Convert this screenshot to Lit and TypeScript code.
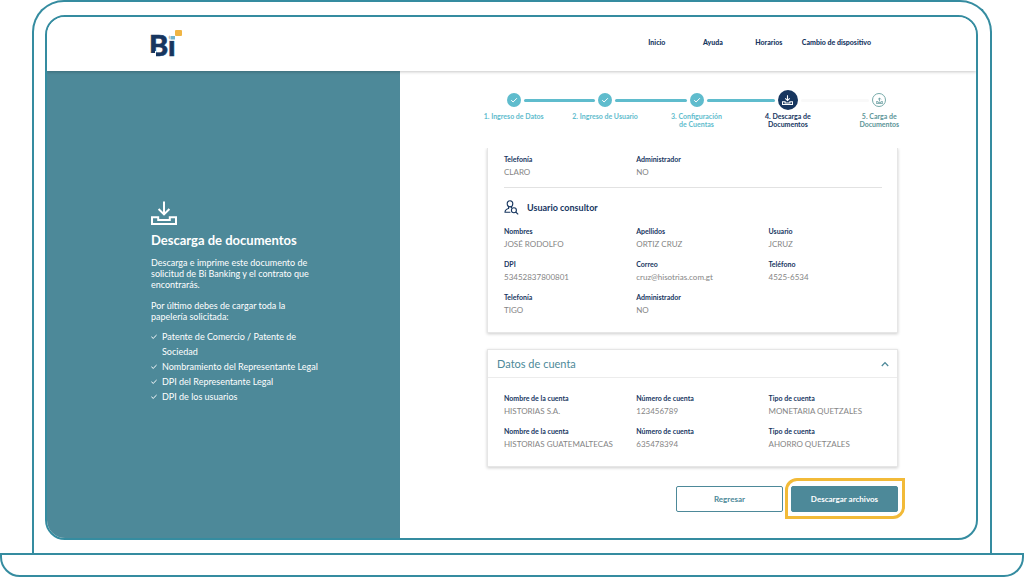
import { LitElement, html, css, svg, nothing } from "lit";
import { customElement, property, state } from "lit/decorators.js";
import { classMap } from "lit/directives/class-map.js";

type StepState = "done" | "current" | "pending";
interface Step {
  label: string;
  state: StepState;
}
type Field = [label: string, value: string];

const trayDown = svg`
  <path d="M13 0.5V13M7.6 8L13 13.4L18.4 8" />
  <path d="M1 16.2H7.2V19H18.8V16.2H25V23H1Z" />`;
const trayUp = svg`
  <path d="M13 15V3M7.6 8L13 2.6L18.4 8" />
  <path d="M1 16.2H7.2V19H18.8V16.2H25V23H1Z" />`;

@customElement("bi-stepper")
export class BiStepper extends LitElement {
  @property({ attribute: false }) steps: Step[] = [];

  static styles = css`
    :host {
      display: block;
    }
    .steps {
      display: grid;
      grid-auto-flow: column;
      grid-auto-columns: 1fr;
      list-style: none;
      margin: 0;
      padding: 0;
    }
    .track {
      display: flex;
      align-items: center;
      gap: 3px;
      height: 20px;
    }
    .line {
      flex: 1;
      height: 3px;
      background: #5fbccd;
    }
    .before {
      border-radius: 0 2px 2px 0;
    }
    .after {
      border-radius: 2px 0 0 2px;
    }
    .pale {
      background: #f9f9f9;
    }
    .hidden {
      visibility: hidden;
    }
    .dot {
      box-sizing: border-box;
      display: grid;
      place-items: center;
      width: 14px;
      height: 14px;
      border-radius: 50%;
      background: #5fbccd;
    }
    .current .dot {
      width: 20px;
      height: 20px;
      background: #17365f;
    }
    .pending .dot {
      background: #fff;
      border: 1px solid #76aaa9;
    }
    svg {
      fill: none;
      stroke: #fff;
    }
    .pending svg {
      stroke: #5c9598;
    }
    .label {
      display: block;
      width: 56px;
      margin: 2px auto 0;
      text-align: center;
      font-size: 7px;
      line-height: 8px;
      font-weight: 700;
      color: #5fbccd;
    }
    .wide {
      width: auto;
    }
    .current .label {
      color: #17365f;
    }
    .pending .label {
      color: #5c9598;
    }
  `;

  private icon(state: StepState) {
    if (state === "done")
      return html`<svg width="8" height="8" viewBox="0 0 8 8"><path d="M1.2 4.2L3.1 6L6.9 2.2" /></svg>`;
    return state === "current"
      ? html`<svg width="11" height="10" viewBox="0 0 26 24" stroke-width="2.6">${trayDown}</svg>`
      : html`<svg width="7" height="7" viewBox="0 0 26 24" stroke-width="2.8">${trayUp}</svg>`;
  }

  render() {
    const last = this.steps.length - 1;
    return html`<ol class="steps">
      ${this.steps.map(
        (s, i) => html`<li class=${s.state} aria-current=${s.state === "current" ? "step" : nothing}>
          <span class="track">
            <span class=${classMap({ line: true, before: true, hidden: i === 0, pale: s.state === "pending" })}></span>
            <span class="dot">${this.icon(s.state)}</span>
            <span class=${classMap({ line: true, after: true, hidden: i === last, pale: s.state !== "done" })}></span>
          </span>
          <span class=${classMap({ label: true, wide: i < 2 })}>${s.label}</span>
        </li>`
      )}
    </ol>`;
  }
}

@customElement("bi-fields")
export class BiFields extends LitElement {
  @property({ attribute: false }) fields: Field[] = [];

  static styles = css`
    :host {
      display: block;
    }
    .fields {
      display: grid;
      grid-template-columns: 35fr 35fr 34fr;
      row-gap: 9px;
      margin: 0;
    }
    .label {
      font-size: 7px;
      line-height: 10px;
      font-weight: 700;
      color: #17365f;
    }
    .value {
      margin: 3px 0 0;
      font-size: 8px;
      line-height: 11px;
      color: #858585;
      white-space: nowrap;
    }
  `;

  render() {
    return html`<dl class="fields">
      ${this.fields.map(
        ([label, value]) => html`<div>
          <dt class="label">${label}</dt>
          <dd class="value">${value}</dd>
        </div>`
      )}
    </dl>`;
  }
}

@customElement("app-root")
export class AppRoot extends LitElement {
  @state() private open = true;

  private steps: Step[] = [
    { label: "1. Ingreso de Datos", state: "done" },
    { label: "2. Ingreso de Usuario", state: "done" },
    { label: "3. Configuración de Cuentas", state: "done" },
    { label: "4. Descarga de Documentos", state: "current" },
    { label: "5. Carga de Documentos", state: "pending" },
  ];

  private phone: Field[] = [
    ["Telefonía", "CLARO"],
    ["Administrador", "NO"],
  ];

  private user: Field[] = [
    ["Nombres", "JOSÉ RODOLFO"],
    ["Apellidos", "ORTIZ CRUZ"],
    ["Usuario", "JCRUZ"],
    ["DPI", "53452837800801"],
    ["Correo", "cruz@hisotrias.com.gt"],
    ["Teléfono", "4525-6534"],
    ["Telefonía", "TIGO"],
    ["Administrador", "NO"],
  ];

  private accounts: Field[] = [
    ["Nombre de la cuenta", "HISTORIAS S.A."],
    ["Número de cuenta", "123456789"],
    ["Tipo de cuenta", "MONETARIA QUETZALES"],
    ["Nombre de la cuenta", "HISTORIAS GUATEMALTECAS"],
    ["Número de cuenta", "635478394"],
    ["Tipo de cuenta", "AHORRO QUETZALES"],
  ];

  private papers = [
    "Patente de Comercio / Patente de Sociedad",
    "Nombramiento del Representante Legal",
    "DPI del Representante Legal",
    "DPI de los usuarios",
  ];

  static styles = css`
    :host {
      display: flex;
      flex-direction: column;
      min-height: 100vh;
      background: #fff;
      font-family: Lato, "Open Sans", sans-serif;
    }
    * {
      box-sizing: border-box;
    }
    .lid {
      flex: 1;
      display: flex;
      margin: 0 32px;
      padding: 13px 12px 13px 11px;
      border: 2px solid #358ca0;
      border-bottom: 0;
      border-radius: 32px 32px 0 0;
    }
    .screen {
      flex: 1;
      display: flex;
      flex-direction: column;
      border: 2px solid #358ca0;
      border-radius: 20px;
      overflow: hidden;
    }
    .base {
      height: 24px;
      border: 2px solid #358ca0;
      border-radius: 0 0 20px 20px;
    }
    .bar {
      position: relative;
      display: flex;
      align-items: center;
      justify-content: space-between;
      height: 54px;
      padding: 0 105px 4px 103px;
      background: #fff;
      box-shadow: 0 1px 3px rgba(0, 0, 0, 0.22);
    }
    .logo {
      display: block;
      overflow: visible;
    }
    .nav {
      display: flex;
    }
    .link {
      min-width: 56px;
      text-align: center;
      font-size: 7px;
      line-height: 10px;
      font-weight: 900;
      color: #17365f;
      text-decoration: none;
    }
    .link:last-child {
      padding-left: 5px;
    }
    .body {
      flex: 1;
      display: grid;
      grid-template-columns: 38fr 62fr;
    }
    .side {
      display: flex;
      flex-direction: column;
      justify-content: center;
      padding: 0 80px 4px 104px;
      background: #4d8999;
      color: #fff;
      font-size: 9px;
      line-height: 11px;
    }
    .tray {
      fill: none;
      stroke: #fff;
      stroke-width: 2;
    }
    .title {
      margin: 6px 0 8px;
      font-size: 13px;
      line-height: 18px;
      font-weight: 700;
    }
    .text {
      margin: 0 0 10px;
    }
    .papers {
      margin: -3px 0 0;
      padding: 0;
      list-style: none;
      line-height: 15px;
    }
    .paper {
      display: flex;
      gap: 5px;
    }
    .tick {
      flex: none;
      margin-top: 4px;
      fill: none;
      stroke: #fff;
    }
    .main {
      display: flex;
      flex-direction: column;
      padding: 19px 51px 24px 68px;
    }
    .panel {
      display: flex;
      flex-direction: column;
      gap: 16px;
      margin: 20px 27px 0 19px;
      clip-path: inset(0 -8px -8px -8px);
    }
    .card {
      background: #fff;
      border: 1px solid #e6e6e6;
      box-shadow: 0 1px 3px rgba(0, 0, 0, 0.2);
    }
    .scrolled {
      border-top: 0;
      padding: 6px 0 16px 16px;
    }
    .rule {
      height: 1px;
      margin: 9px 15px 11px 0;
      border: 0;
      background: #e2e2e2;
    }
    .role {
      display: flex;
      align-items: center;
      gap: 8px;
      margin: 0 0 10px;
      font-size: 9px;
      line-height: 17px;
      font-weight: 700;
      color: #17365f;
    }
    .person {
      fill: none;
      stroke: #17365f;
    }
    .toggle {
      display: flex;
      align-items: center;
      justify-content: space-between;
      width: 100%;
      height: 28px;
      padding: 0 8px 0 9px;
      border: 0;
      border-bottom: 1px solid #ececec;
      background: #fff;
      font: inherit;
      font-size: 11px;
      line-height: 14px;
      color: #4d8999;
      cursor: pointer;
    }
    .chevron {
      fill: none;
      stroke: #4d8999;
      stroke-width: 1.3;
    }
    .heading {
      margin: 0;
      font-size: 11px;
      font-weight: 400;
    }
    .accounts {
      padding: 15px 0 16px 16px;
    }
    .actions {
      display: flex;
      justify-content: flex-end;
      gap: 8px;
      margin: 19px 27px 0 0;
    }
    .btn {
      position: relative;
      width: 107px;
      height: 26px;
      padding: 0;
      border: 1px solid #4d8999;
      border-radius: 2px;
      background: #fff;
      color: #4d8999;
      font: inherit;
      font-size: 8px;
      line-height: 10px;
      font-weight: 700;
      cursor: pointer;
    }
    .primary {
      background: #4d8999;
      color: #fff;
    }
    .primary::after {
      content: "";
      position: absolute;
      inset: -9px -8px -8px -7px;
      border: 3px solid #f2ba38;
      border-radius: 12px 0;
    }
  `;

  render() {
    return html`
      <div class="lid">
        <div class="screen">
          <header class="bar">
            <svg class="logo" width="34" height="36" viewBox="0 0 34 36" role="img" aria-label="Bi">
              <text x="-1" y="32" font-size="29" font-weight="900" fill="#17365f" stroke="#17365f" stroke-width="0.6">Bi</text>
              <path d="M19.4 8H28V16.6H19.4Z" fill="#fff" />
              <path d="M0 29H5V33H0ZM5 27H6V33H5Z" fill="#fff" />
              <rect x="20.5" y="12" width="4.5" height="3.5" fill="#6fb4cd" />
              <rect x="25" y="6" width="7" height="6" rx="1" fill="#f0b544" />
            </svg>
            <nav class="nav">
              <a class="link" href="#inicio">Inicio</a>
              <a class="link" href="#ayuda">Ayuda</a>
              <a class="link" href="#horarios">Horarios</a>
              <a class="link" href="#dispositivo">Cambio de dispositivo</a>
            </nav>
          </header>
          <div class="body">
            <aside class="side">
              <svg class="tray" width="26" height="24" viewBox="0 0 26 24">${trayDown}</svg>
              <h1 class="title">Descarga de documentos</h1>
              <p class="text">Descarga e imprime este documento de solicitud de Bi Banking y el contrato que encontrarás.</p>
              <p class="text">Por último debes de cargar toda la papelería solicitada:</p>
              <ul class="papers">
                ${this.papers.map(
                  (p) => html`<li class="paper">
                    <svg class="tick" width="6" height="7" viewBox="0 0 6 7"><path d="M0.4 3.8L2.2 5.4L5.6 2" /></svg>
                    <span>${p}</span>
                  </li>`
                )}
              </ul>
            </aside>
            <main class="main">
              <bi-stepper .steps=${this.steps}></bi-stepper>
              <div class="panel">
                <section class="card scrolled">
                  <bi-fields .fields=${this.phone}></bi-fields>
                  <hr class="rule" />
                  <h2 class="role">
                    <svg class="person" width="15" height="15" viewBox="0 0 15 15" stroke-width="1.1">
                      <ellipse cx="6" cy="3.8" rx="2.8" ry="3.1" />
                      <path d="M4.6 6.8V8.4C2.6 9 1 9.4 1 12.2H6.4M7.4 6.8V8" />
                      <circle cx="9.9" cy="10.2" r="2.5" />
                      <path d="M11.7 12L14.2 14.3" />
                    </svg>
                    Usuario consultor
                  </h2>
                  <bi-fields .fields=${this.user}></bi-fields>
                </section>
                <section class="card">
                  <h2 class="heading">
                    <button
                      class="toggle"
                      type="button"
                      aria-expanded=${this.open ? "true" : "false"}
                      @click=${() => (this.open = !this.open)}
                    >
                      Datos de cuenta
                      <svg class="chevron" width="8" height="6" viewBox="0 0 8 6"><path d="M0.8 5L4 1.6L7.2 5" /></svg>
                    </button>
                  </h2>
                  ${this.open
                    ? html`<div class="accounts"><bi-fields .fields=${this.accounts}></bi-fields></div>`
                    : nothing}
                </section>
              </div>
              <div class="actions">
                <button class="btn" type="button">Regresar</button>
                <button class="btn primary" type="button">Descargar archivos</button>
              </div>
            </main>
          </div>
        </div>
      </div>
      <div class="base"></div>
    `;
  }
}
